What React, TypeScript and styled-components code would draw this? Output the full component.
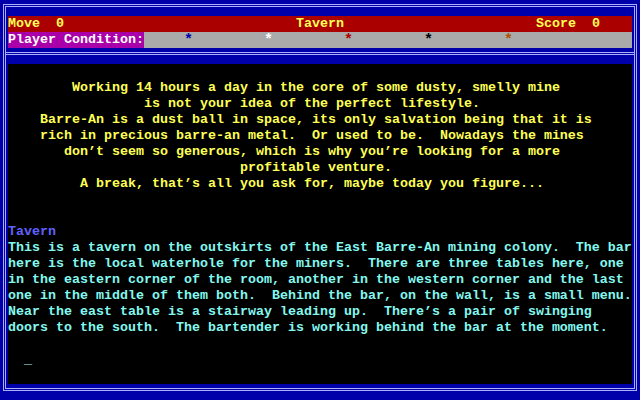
import React from "react";
import styled, { createGlobalStyle } from "styled-components";

const GlobalStyle = createGlobalStyle`
  html, body {
    margin: 0;
    padding: 0;
    background: #0000aa;
  }
  body {
    width: 640px;
    height: 400px;
    overflow: hidden;
  }
`;

const Screen = styled.div`
  width: 640px;
  height: 400px;
  box-sizing: border-box;
  background: #0000aa;
  padding: 4px 3px 9px 3px;
  font-family: "Liberation Mono", "DejaVu Sans Mono", monospace;
  font-size: 13.333px;
  font-weight: bold;
  line-height: 16px;
`;

const Frame = styled.div`
  height: 100%;
  box-sizing: border-box;
  border: 3px double #acacf8;
  display: flex;
  flex-direction: column;
`;

const Header = styled.div`
  margin: 9px 2px 0 2px;
  display: flex;
  flex-direction: column;
`;

const StatusBar = styled.div`
  height: 16px;
  background: #aa0000;
  color: #ffff55;
  display: grid;
  grid-template-columns: 1fr auto 1fr;
  white-space: pre;
`;

const StatusItem = styled.span<{ $align: "start" | "center" | "end" }>`
  justify-self: ${(p) => p.$align};
  margin-right: ${(p) => (p.$align === "end" ? "32px" : "0")};
`;

const ConditionBar = styled.div`
  height: 16px;
  display: flex;
  white-space: pre;
`;

const ConditionLabel = styled.span`
  background: #aa00aa;
  color: #ffffff;
`;

const ConditionGauge = styled.div`
  flex: 1;
  background: #aaaaaa;
  display: flex;
  gap: 72px;
  padding-left: 40px;
`;

const Star = styled.span<{ $color: string }>`
  width: 8px;
  font-size: 15px;
  line-height: 18px;
  color: ${(p) => p.$color};
`;

const Separator = styled.div`
  margin-top: 4px;
  border-top: 3px double #acacf8;
`;

const Content = styled.div`
  margin: 9px 2px 0 2px;
  height: 320px;
  background: #000000;
  display: flex;
  flex-direction: column;
`;

const Line = styled.div<{ $color: string }>`
  height: 16px;
  white-space: pre;
  color: ${(p) => p.$color};
`;

const YELLOW = "#ffff55";
const CYAN = "#84f8f0";
const LIGHTBLUE = "#6060ff";

const intro: [number, string][] = [
  [8, "Working 14 hours a day in the core of some dusty, smelly mine"],
  [17, "is not your idea of the perfect lifestyle."],
  [4, "Barre-An is a dust ball in space, its only salvation being that it is"],
  [4, "rich in precious barre-an metal.  Or used to be.  Nowadays the mines"],
  [7, "don\u2019t seem so generous, which is why you\u2019re looking for a more"],
  [29, "profitable venture."],
  [9, "A break, that\u2019s all you ask for, maybe today you figure..."],
];

const description = [
  "This is a tavern on the outskirts of the East Barre-An mining colony.  The bar",
  "here is the local waterhole for the miners.  There are three tables here, one",
  "in the eastern corner of the room, another in the western corner and the last",
  "one in the middle of them both.  Behind the bar, on the wall, is a small menu.",
  "Near the east table is a stairway leading up.  There\u2019s a pair of swinging",
  "doors to the south.  The bartender is working behind the bar at the moment.",
];

const lines: { text: string; color: string }[] = [
  { text: "", color: YELLOW },
  ...intro.map(([pad, t]) => ({ text: " ".repeat(pad) + t, color: YELLOW })),
  { text: "", color: YELLOW },
  { text: "", color: YELLOW },
  { text: "Tavern", color: LIGHTBLUE },
  ...description.map((t) => ({ text: t, color: CYAN })),
  { text: "", color: CYAN },
  { text: "  _", color: "#a8f4f0" },
];

const stars = ["#0000aa", "#ffffff", "#aa0000", "#000000", "#aa5500"];

export default function App() {
  return (
    <>
      <GlobalStyle />
      <Screen>
        <Frame>
          <Header>
            <StatusBar>
              <StatusItem $align="start">Move  0</StatusItem>
              <StatusItem $align="center">Tavern</StatusItem>
              <StatusItem $align="end">Score  0</StatusItem>
            </StatusBar>
            <ConditionBar>
              <ConditionLabel>Player Condition:</ConditionLabel>
              <ConditionGauge>
                {stars.map((c, i) => (
                  <Star key={i} $color={c}>
                    *
                  </Star>
                ))}
              </ConditionGauge>
            </ConditionBar>
          </Header>
          <Separator />
          <Content>
            {lines.map((l, i) => (
              <Line key={i} $color={l.color}>
                {l.text}
              </Line>
            ))}
          </Content>
        </Frame>
      </Screen>
    </>
  );
}
